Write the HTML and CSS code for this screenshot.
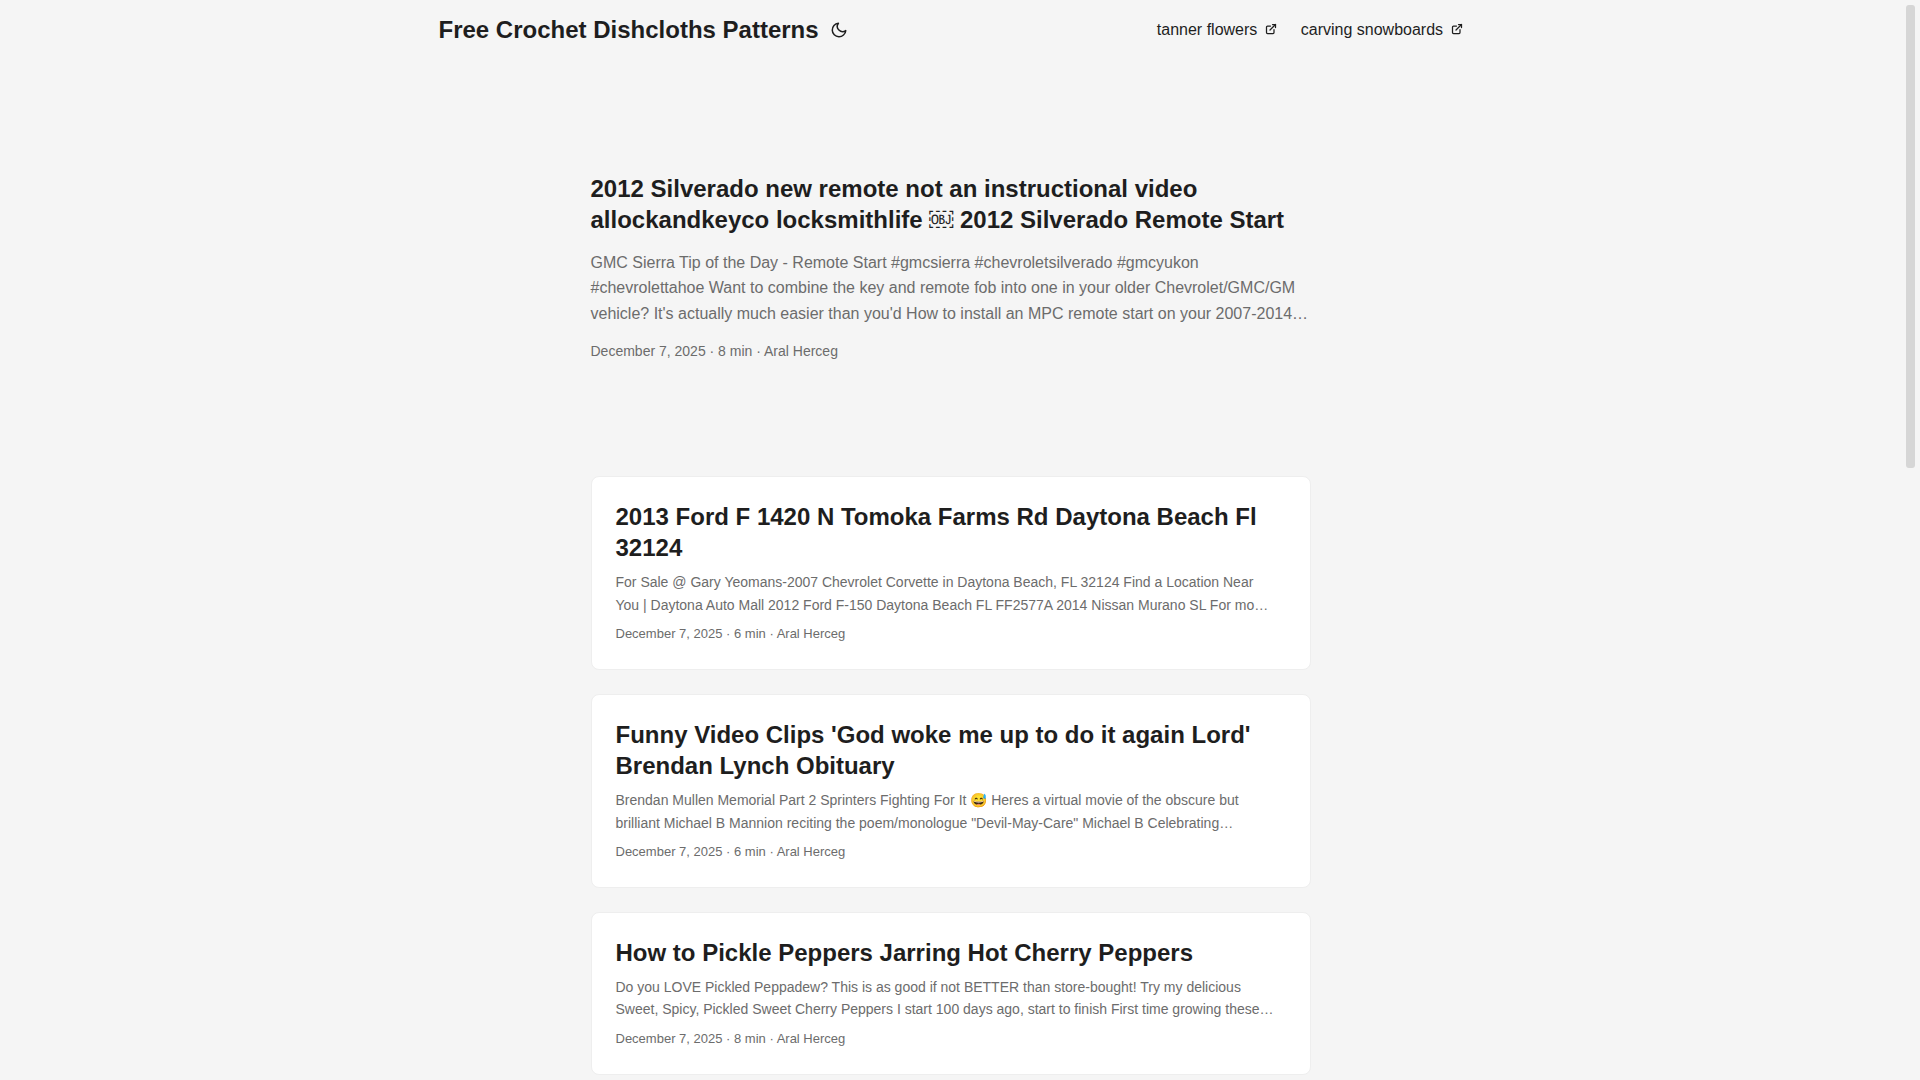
FILE: index.html
```
<!DOCTYPE html>
<html lang="en">
<head>
  <meta charset="UTF-8">
  <title>Free Crochet Dishcloths Patterns</title>
  <meta name="viewport" content="width=device-width, initial-scale=1">
  <link rel="stylesheet" href="styles.css">
</head>

<body>
  <header class="header">
    <nav class="nav">
      <div class="logo">
        <a href="#">Free Crochet Dishcloths Patterns</a>
        <button class="theme-toggle" type="button" aria-label="Toggle theme">
          <svg width="24" height="18" viewBox="0 0 24 24" fill="none" stroke="currentColor" stroke-width="2" stroke-linecap="round" stroke-linejoin="round">
            <path d="M21 12.79A9 9 0 1 1 11.21 3 7 7 0 0 0 21 12.79z"></path>
          </svg>
        </button>
      </div>
      <ul class="menu">
        <li>
          <a href="#">tanner flowers
            <svg width="12" height="12" viewBox="0 0 24 24" fill="none" stroke="currentColor" stroke-width="2.5" stroke-linecap="round" stroke-linejoin="round" shape-rendering="geometricPrecision">
              <path d="M18 13v6a2 2 0 01-2 2H5a2 2 0 01-2-2V8a2 2 0 012-2h6"></path>
              <path d="M15 3h6v6"></path>
              <path d="M10 14L21 3"></path>
            </svg>
          </a>
        </li>
        <li>
          <a href="#">carving snowboards
            <svg width="12" height="12" viewBox="0 0 24 24" fill="none" stroke="currentColor" stroke-width="2.5" stroke-linecap="round" stroke-linejoin="round" shape-rendering="geometricPrecision">
              <path d="M18 13v6a2 2 0 01-2 2H5a2 2 0 01-2-2V8a2 2 0 012-2h6"></path>
              <path d="M15 3h6v6"></path>
              <path d="M10 14L21 3"></path>
            </svg>
          </a>
        </li>
      </ul>
    </nav>
  </header>

  <main class="main">
    <article class="first-entry">
      <h2 class="entry-title"><a href="#">2012 Silverado new remote not an instructional video allockandkeyco locksmithlife &#xFFFC; 2012 Silverado Remote Start</a></h2>
      <p class="entry-content">GMC Sierra Tip of the Day - Remote Start #gmcsierra #chevroletsilverado #gmcyukon #chevrolettahoe Want to combine the key and remote fob into one in your older Chevrolet/GMC/GM vehicle? It's actually much easier than you'd How to install an MPC remote start on your 2007-2014…</p>
      <footer class="entry-footer">December 7, 2025 · 8 min · Aral Herceg</footer>
    </article>

    <article class="post-entry">
      <h2 class="entry-title"><a href="#">2013 Ford F 1420 N Tomoka Farms Rd Daytona Beach Fl 32124</a></h2>
      <p class="entry-content">For Sale @ Gary Yeomans-2007 Chevrolet Corvette in Daytona Beach, FL 32124 Find a Location Near You&nbsp;| Daytona Auto Mall 2012 Ford F-150 Daytona Beach FL FF2577A 2014 Nissan Murano SL For mo…</p>
      <footer class="entry-footer">December 7, 2025 · 6 min · Aral Herceg</footer>
    </article>

    <article class="post-entry">
      <h2 class="entry-title"><a href="#">Funny Video Clips 'God woke me up to do it again Lord' Brendan Lynch Obituary</a></h2>
      <p class="entry-content">Brendan Mullen Memorial Part 2 Sprinters Fighting For It 😅 Heres a virtual movie of the obscure but brilliant Michael B Mannion reciting the poem/monologue "Devil-May-Care" Michael B Celebrating…</p>
      <footer class="entry-footer">December 7, 2025 · 6 min · Aral Herceg</footer>
    </article>

    <article class="post-entry">
      <h2 class="entry-title"><a href="#">How to Pickle Peppers Jarring Hot Cherry Peppers</a></h2>
      <p class="entry-content">Do you LOVE Pickled Peppadew? This is as good if not BETTER than store-bought! Try my delicious Sweet, Spicy, Pickled Sweet Cherry Peppers I start 100 days ago, start to finish First time growing these…</p>
      <footer class="entry-footer">December 7, 2025 · 8 min · Aral Herceg</footer>
    </article>
  </main>

  <div class="scrollbar" aria-hidden="true">
    <div class="scrollbar-thumb"></div>
  </div>
</body>
</html>
```
FILE: styles.css
```
:root {
  --gap: 24px;
  --nav-width: 1024px;
  --main-width: 720px;
  --header-height: 60px;
  --radius: 8px;
  --scrollbar: 19px;
  --theme: #f5f5f5;
  --entry: #ffffff;
  --primary: #1e1e1e;
  --secondary: #6c6c6c;
  --tertiary: #d6d6d6;
  --border: #eeeeee;
}

* {
  box-sizing: border-box;
  margin: 0;
  padding: 0;
}

html {
  scrollbar-width: none;
}

body {
  padding-right: var(--scrollbar);
  background: var(--theme);
  color: var(--primary);
  font-family: "Liberation Sans", Arial, sans-serif;
  font-size: 18px;
  line-height: 1.6;
}

a {
  color: inherit;
  text-decoration: none;
}

ul {
  list-style: none;
}

.nav {
  display: flex;
  flex-wrap: wrap;
  justify-content: space-between;
  max-width: calc(var(--nav-width) + var(--gap) * 2);
  margin: 0 auto;
  padding: 0 var(--gap);
  line-height: var(--header-height);
}

.logo {
  display: flex;
  align-items: center;
  font-size: 24px;
  font-weight: 700;
}

.theme-toggle {
  display: flex;
  margin: 0 8px;
  border: 0;
  background: none;
  color: inherit;
  cursor: pointer;
}

.menu {
  display: flex;
  gap: var(--gap);
  font-size: 16px;
}

.menu svg {
  margin-left: 3px;
}

/* posts */
.main {
  max-width: calc(var(--main-width) + var(--gap) * 2);
  margin: 0 auto;
  padding: var(--gap);
}

.first-entry {
  display: flex;
  flex-direction: column;
  justify-content: center;
  min-height: 320px;
  margin: var(--gap) 0 calc(var(--gap) * 2);
}

.post-entry {
  margin-bottom: var(--gap);
  padding: var(--gap);
  background: var(--entry);
  border: 1px solid var(--border);
  border-radius: var(--radius);
}

.entry-title {
  font-family: "Liberation Sans", Arial, "Noto Sans", sans-serif;
  font-size: 24px;
  line-height: 1.3;
}

.entry-content {
  margin: 8px 0;
  color: var(--secondary);
  font-size: 14px;
}

.entry-footer {
  color: var(--secondary);
  font-size: 13px;
}

.first-entry .entry-content {
  margin: 14px 0;
  font-size: 16px;
}

.first-entry .entry-footer {
  font-size: 14px;
}

/* scrollbar */
.scrollbar {
  position: fixed;
  top: 0;
  right: 0;
  bottom: 0;
  width: var(--scrollbar);
  padding: 5px;
}

.scrollbar-thumb {
  height: 43.3%;
  background: var(--tertiary);
  border-radius: 3px;
}
```
